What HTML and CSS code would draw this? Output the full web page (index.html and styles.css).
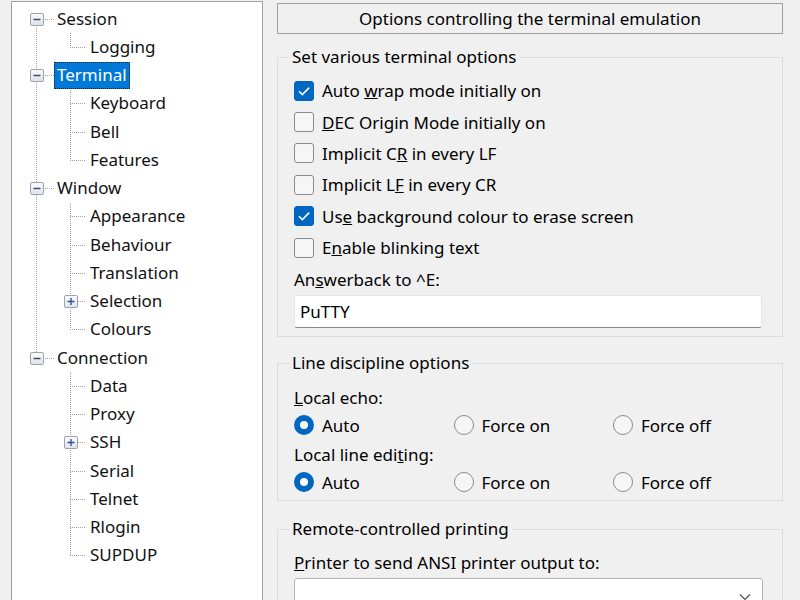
FILE: index.html
```html
<!DOCTYPE html>
<html>
<head>
<meta charset="utf-8">
<title>PuTTY Configuration</title>
<link rel="stylesheet" href="styles.css">
</head>
<body>
<div class="dialog">
  <div class="tree">
    <div class="roots">
      <div class="row r0"><span class="exp"><svg width="14" height="13" viewBox="0 0 14 13"><path d="M3.5 6.5h7" stroke="#3f4b66" stroke-width="1.4"/></svg></span><span class="lbl">Session</span></div>
      <div class="kids">
        <div class="row r1"><span class="lbl">Logging</span></div>
      </div>
      <div class="row r0"><span class="exp"><svg width="14" height="13" viewBox="0 0 14 13"><path d="M3.5 6.5h7" stroke="#3f4b66" stroke-width="1.4"/></svg></span><span class="lbl sel">Terminal</span></div>
      <div class="kids">
        <div class="row r1"><span class="lbl">Keyboard</span></div>
        <div class="row r1"><span class="lbl">Bell</span></div>
        <div class="row r1"><span class="lbl">Features</span></div>
      </div>
      <div class="row r0"><span class="exp"><svg width="14" height="13" viewBox="0 0 14 13"><path d="M3.5 6.5h7" stroke="#3f4b66" stroke-width="1.4"/></svg></span><span class="lbl">Window</span></div>
      <div class="kids">
        <div class="row r1"><span class="lbl">Appearance</span></div>
        <div class="row r1"><span class="lbl">Behaviour</span></div>
        <div class="row r1"><span class="lbl">Translation</span></div>
        <div class="row r1 has-exp"><span class="exp"><svg width="14" height="13" viewBox="0 0 14 13"><path d="M3.5 6.5h7M7 3v7" stroke="#2f4fa0" stroke-width="1.4"/></svg></span><span class="lbl">Selection</span></div>
        <div class="row r1"><span class="lbl">Colours</span></div>
      </div>
      <div class="row r0"><span class="exp"><svg width="14" height="13" viewBox="0 0 14 13"><path d="M3.5 6.5h7" stroke="#3f4b66" stroke-width="1.4"/></svg></span><span class="lbl">Connection</span></div>
    </div>
    <div class="kids">
      <div class="row r1"><span class="lbl">Data</span></div>
      <div class="row r1"><span class="lbl">Proxy</span></div>
      <div class="row r1 has-exp"><span class="exp"><svg width="14" height="13" viewBox="0 0 14 13"><path d="M3.5 6.5h7M7 3v7" stroke="#2f4fa0" stroke-width="1.4"/></svg></span><span class="lbl">SSH</span></div>
      <div class="row r1"><span class="lbl">Serial</span></div>
      <div class="row r1"><span class="lbl">Telnet</span></div>
      <div class="row r1"><span class="lbl">Rlogin</span></div>
      <div class="row r1"><span class="lbl">SUPDUP</span></div>
    </div>
  </div>

  <div class="panel">
    <div class="header">Options controlling the terminal emulation</div>

    <fieldset class="group g1">
      <legend>Set various terminal options</legend>
      <div class="check on"><span class="box"><svg width="20" height="20" viewBox="0 0 20 20"><path d="M5 10.2l3.4 3.4L15.2 6.6" fill="none" stroke="#fff" stroke-width="1.6"/></svg></span><span>Auto <u>w</u>rap mode initially on</span></div>
      <div class="check"><span class="box"></span><span><u>D</u>EC Origin Mode initially on</span></div>
      <div class="check"><span class="box"></span><span>Implicit C<u>R</u> in every LF</span></div>
      <div class="check"><span class="box"></span><span>Implicit L<u>F</u> in every CR</span></div>
      <div class="check on"><span class="box"><svg width="20" height="20" viewBox="0 0 20 20"><path d="M5 10.2l3.4 3.4L15.2 6.6" fill="none" stroke="#fff" stroke-width="1.6"/></svg></span><span>Us<u>e</u> background colour to erase screen</span></div>
      <div class="check"><span class="box"></span><span>E<u>n</u>able blinking text</span></div>
      <div class="text-label">An<u>s</u>werback to ^E:</div>
      <div class="input">PuTTY</div>
    </fieldset>

    <fieldset class="group g2">
      <legend>Line discipline options</legend>
      <div class="sub-label"><u>L</u>ocal echo:</div>
      <div class="radios">
        <div class="radio on"><span class="dot"></span><span>Auto</span></div>
        <div class="radio"><span class="dot"></span><span>Force on</span></div>
        <div class="radio"><span class="dot"></span><span>Force off</span></div>
      </div>
      <div class="sub-label">Local line edi<u>t</u>ing:</div>
      <div class="radios">
        <div class="radio on"><span class="dot"></span><span>Auto</span></div>
        <div class="radio"><span class="dot"></span><span>Force on</span></div>
        <div class="radio"><span class="dot"></span><span>Force off</span></div>
      </div>
    </fieldset>

    <fieldset class="group g3">
      <legend>Remote-controlled printing</legend>
      <div class="sub-label print-label"><u>P</u>rinter to send ANSI printer output to:</div>
      <div class="select"><svg width="12" height="8" viewBox="0 0 12 8"><path d="M1 1.5l5 5 5-5" fill="none" stroke="#555" stroke-width="1.2"/></svg></div>
    </fieldset>
  </div>
</div>
</body>
</html>
```

FILE: styles.css
```css
:root {
  --vdot: repeating-linear-gradient(to bottom, #a3a3a3 0 1px, transparent 1px 2px);
  --hdot: repeating-linear-gradient(to right, #a3a3a3 0 1px, transparent 1px 2px);
}

html, body {
  margin: 0;
  padding: 0;
  background: #f0f0f0;
  overflow: hidden;
}

body {
  font-family: "Noto Sans", "Open Sans", sans-serif;
  font-size: 17px;
  color: #000;
}

.dialog {
  display: flex;
  align-items: flex-start;
  width: 800px;
  height: 600px;
  overflow: hidden;
}

/* ---------- tree ---------- */
.tree {
  margin: 1px 0 0 11px;
  width: 250px;
  height: 640px;
  border: 1px solid #a0a0a0;
  background: #fff;
  padding-top: 3px;
  flex: none;
}

.roots {
  background-image: var(--vdot);
  background-repeat: no-repeat;
  background-size: 1px calc(100% - 28.25px);
  background-position: 24px 14px;
}

.kids {
  background-image: var(--vdot);
  background-repeat: no-repeat;
  background-size: 1px calc(100% - 14px);
  background-position: 58px 0;
}

.row {
  display: flex;
  align-items: center;
  height: 28.25px;
  white-space: nowrap;
  background-repeat: no-repeat;
}

.r0 {
  padding-left: 18px;
  background-image: var(--hdot);
  background-size: 11px 1px;
  background-position: 31px 50%;
}

.r1 {
  padding-left: 75px;
  background-image: var(--hdot);
  background-size: 16px 1px;
  background-position: 58px 50%;
}

.r1.has-exp {
  padding-left: 52px;
}

.exp {
  display: block;
  width: 12px;
  height: 11px;
  border: 1px solid #9aa2b2;
  border-radius: 2px;
  background: linear-gradient(#fbfbfc, #dfe3ea);
  overflow: hidden;
  flex: none;
}

.exp svg {
  display: block;
  margin: -1px 0 0 -1px;
}

.r0 .lbl {
  margin-left: 10px;
}

.r1.has-exp .lbl {
  margin-left: 9px;
}

.lbl {
  padding: 0 3px;
  height: 27px;
  line-height: 26px;
  color: #111;
}

.lbl.sel {
  background: #0078d7;
  color: #fff;
  outline: 1px dotted #222;
  outline-offset: -1px;
}

/* ---------- right panel ---------- */
.panel {
  margin-left: 14px;
  width: 506px;
  flex: none;
}

.header {
  margin-top: 3px;
  height: 29px;
  border: 1px solid #a0a0a0;
  text-align: center;
  line-height: 29px;
}

.group {
  margin: 0;
  padding: 0 0 0 16px;
  border: 1px solid #dcdcdc;
  min-width: 0;
}

.group legend {
  margin-left: -5px;
  padding: 0 3px;
  line-height: 20px;
}

.g1 {
  margin-top: 13px;
  padding-top: 8px;
  padding-bottom: 8px;
}

.check {
  display: flex;
  align-items: center;
  height: 31.4px;
}

.check .box {
  width: 18px;
  height: 18px;
  border: 1px solid #8a8a8a;
  border-radius: 3px;
  background: #f6f6f6;
  margin-right: 8px;
  flex: none;
}

.check.on .box {
  border-color: #0067c0;
  background: #0067c0;
}

.check .box svg {
  display: block;
  margin: -1px 0 0 -1px;
}

.text-label {
  height: 32px;
  line-height: 34px;
}

.input {
  width: 461px;
  height: 31px;
  padding-left: 5px;
  line-height: 31px;
  background: #fff;
  border: 1px solid #e6e6e6;
  border-bottom-color: #8a8a8a;
  border-radius: 3px;
}

.g2 {
  margin-top: 16px;
  padding-top: 10px;
  padding-bottom: 3px;
}

.sub-label {
  height: 30px;
  line-height: 30px;
}

.radios {
  display: grid;
  grid-template-columns: 159.5px 159.5px 1fr;
  height: 27px;
  align-items: start;
}

.radio {
  display: flex;
  align-items: center;
  height: 24px;
}

.radio .dot {
  width: 18px;
  height: 18px;
  border: 1px solid #8a8a8a;
  border-radius: 50%;
  background: #f6f6f6;
  margin-right: 8px;
  flex: none;
  box-sizing: content-box;
}

.radio.on .dot {
  width: 8px;
  height: 8px;
  border: 6px solid #0067c0;
  background: #fff;
}

.g3 {
  margin-top: 18px;
  padding-top: 10px;
  height: 90px;
}

.print-label {
  height: 29px;
  line-height: 28px;
}

.select {
  width: 467px;
  height: 32px;
  background: #fff;
  border: 1px solid #b5b5b5;
  border-radius: 3px;
  display: flex;
  align-items: flex-start;
  justify-content: flex-end;
}

.select svg {
  display: block;
  margin: 14px 11px 0 0;
}
```
